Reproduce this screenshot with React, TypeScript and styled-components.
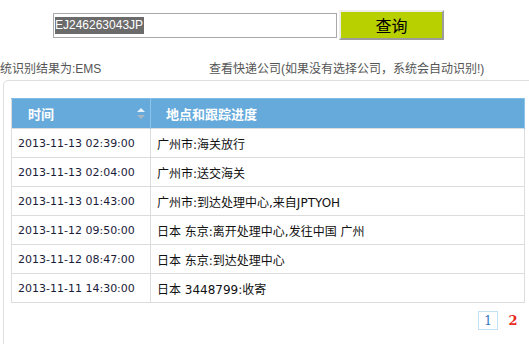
import React from 'react'
import styled, {createGlobalStyle} from 'styled-components'

const GlobalStyle = createGlobalStyle`
  html, body {
    margin: 0;
    padding: 0;
    overflow: hidden;
    background: #fff;
    font-family: "Liberation Sans", "Noto Sans CJK SC", sans-serif;
    font-size: 12px;
    color: #333;
  }
`

const Page = styled.div`
  width: 529px;
  height: 344px;
  overflow: hidden;
`

const SearchBar = styled.div`
  display: flex;
  align-items: center;
  gap: 2px;
  padding: 10px 0 0 53px;
`

const FakeInput = styled.div`
  box-sizing: border-box;
  width: 284px;
  height: 25px;
  border: 1px solid #a9a9a9;
  padding: 2px 1px;
  display: flex;
  align-items: center;
  font-size: 12px;
`

const Selected = styled.span`
  background: #6b6b6b;
  color: #fff;
  line-height: 17px;
  padding-right: 1px;
`

const SearchButton = styled.button`
  box-sizing: border-box;
  width: 105px;
  height: 30px;
  background: #b8cf00;
  border-style: solid;
  border-width: 2px;
  border-color: #ececec #9c9c9c #9c9c9c #ececec;
  font-family: "Noto Sans CJK SC", sans-serif;
  font-size: 16px;
  color: #000;
  padding: 0;
  cursor: pointer;
`

const InfoRow = styled.div`
  display: flex;
  margin-top: 21px;
  line-height: 16px;
  color: #555;
`

const Info = styled.div<{width?: number}>`
  white-space: nowrap;
  ${(props) => props.width && `width: ${props.width}px;`}
`

const Panel = styled.div`
  box-sizing: border-box;
  width: 560px;
  height: 300px;
  margin: 3px 0 0 3px;
  border: 1px solid #dedede;
  border-radius: 5px;
  padding: 17px 0 0 7px;
`

const Table = styled.table`
  width: 514px;
  border-collapse: collapse;
  border: 1px solid #dcdcdc;
`

const Th = styled.th<{first?: boolean}>`
  position: relative;
  height: 29px;
  padding: 0 0 0 ${(props) => (props.first ? 16 : 15)}px;
  text-align: left;
  background: #65aadb;
  border-top: 1px solid #7dbbe7;
  border-right: 1px solid #8cc4ea;
  color: #fff;
  font-family: "Noto Sans CJK SC", sans-serif;
  font-weight: bold;
  font-size: 13px;
  ${(props) => props.first && `width: 122px;`}
`

const SortIcon = styled.svg`
  position: absolute;
  right: 5px;
  top: 9px;
`

const Td = styled.td<{date?: boolean}>`
  height: 28px;
  padding: 0 0 0 6px;
  border: 1px solid #dcdcdc;
  color: ${(props) => (props.date ? '#1b1b3a' : '#111')};
  font-family: ${(props) =>
    props.date
      ? '"DejaVu Sans", sans-serif'
      : '"DejaVu Sans", "Noto Sans CJK SC", sans-serif'};
  font-size: ${(props) => (props.date ? 11 : 12)}px;
  white-space: nowrap;
`

const Pager = styled.div`
  display: flex;
  justify-content: flex-end;
  gap: 5px;
  width: 512px;
  margin-top: 8px;
`

const PageItem = styled.span<{current?: boolean}>`
  box-sizing: border-box;
  width: 20px;
  height: 19px;
  display: flex;
  align-items: center;
  justify-content: center;
  font-family: "DejaVu Serif", serif;
  ${(props) =>
    props.current
      ? `
  border: 1px solid #c2e0f2;
  color: #2f74c4;
  font-size: 12px;
`
      : `
  color: #e8291c;
  font-weight: bold;
  font-size: 13px;
`}
`

const rows: [string, string][] = [
  ['2013-11-13 02:39:00', '广州市:海关放行'],
  ['2013-11-13 02:04:00', '广州市:送交海关'],
  ['2013-11-13 01:43:00', '广州市:到达处理中心,来自JPTYOH'],
  ['2013-11-12 09:50:00', '日本 东京:离开处理中心,发往中国 广州'],
  ['2013-11-12 08:47:00', '日本 东京:到达处理中心'],
  ['2013-11-11 14:30:00', '日本 3448799:收寄'],
]

export default function App() {
  return (
    <Page>
      <GlobalStyle />
      <SearchBar>
        <FakeInput>
          <Selected>EJ246263043JP</Selected>
        </FakeInput>
        <SearchButton>查询</SearchButton>
      </SearchBar>
      <InfoRow>
        <Info width={209}>统识别结果为:EMS</Info>
        <Info>查看快递公司(如果没有选择公司，系统会自动识别!)</Info>
      </InfoRow>
      <Panel>
        <Table>
          <thead>
            <tr>
              <Th first>
                时间
                <SortIcon width="8" height="12" viewBox="0 0 8 12">
                  <path d="M4 0 L8 4 L0 4 Z" fill="#e6f1fa" />
                  <path d="M0 7 L8 7 L4 11 Z" fill="#a9b6c2" />
                </SortIcon>
              </Th>
              <Th>地点和跟踪进度</Th>
            </tr>
          </thead>
          <tbody>
            {rows.map(([time, place]) => (
              <tr key={time}>
                <Td date>{time}</Td>
                <Td>{place}</Td>
              </tr>
            ))}
          </tbody>
        </Table>
        <Pager>
          <PageItem current>1</PageItem>
          <PageItem>2</PageItem>
        </Pager>
      </Panel>
    </Page>
  )
}
